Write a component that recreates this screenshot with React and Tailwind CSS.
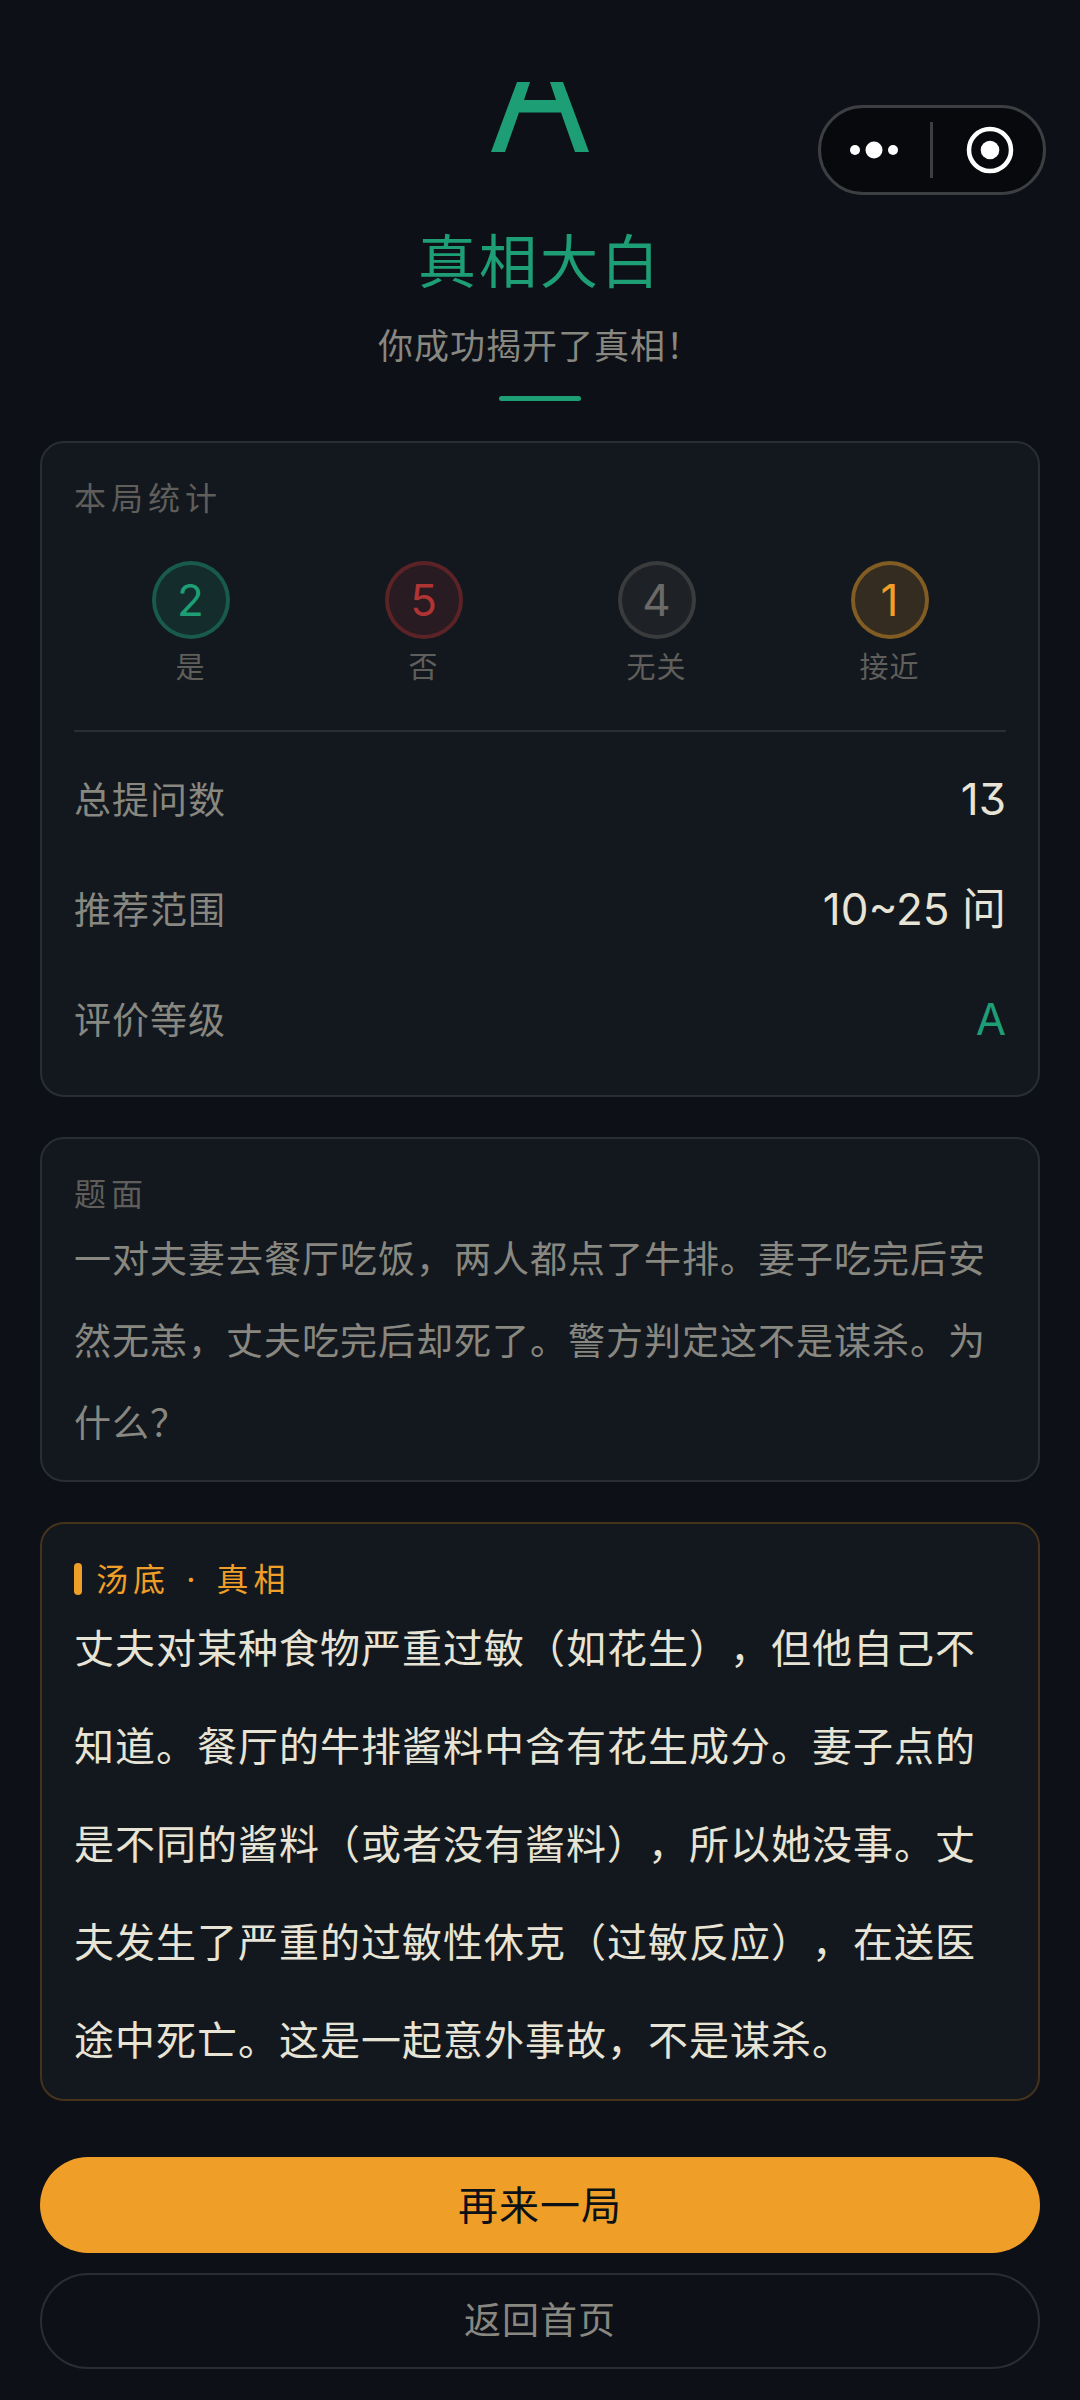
const counts = [
  { label: '是', value: 2, tone: 'border-[#1d9e75]/50 bg-[#1d9e75]/15 text-[#1d9e75]' },
  { label: '否', value: 5, tone: 'border-[#a32d2d]/50 bg-[#a32d2d]/15 text-[#b03434]' },
  { label: '无关', value: 4, tone: 'border-[#5f5e5a]/50 bg-[#5f5e5a]/15 text-[#6b6a66]' },
  { label: '接近', value: 1, tone: 'border-[#ef9f27]/50 bg-[#ef9f27]/15 text-[#ef9f27]' },
]

const summary = [
  { label: '总提问数', value: '13', color: 'text-[#e8e4d5]' },
  { label: '推荐范围', value: '10~25 问', color: 'text-[#e8e4d5]' },
  { label: '评价等级', value: 'A', color: 'text-[#1d9e75]' },
]

const NUMERIC = "font-['Inter','Noto_Sans_CJK_SC',sans-serif] [font-feature-settings:'cv09']"

function Capsule() {
  return (
    <div className="absolute top-[105px] right-[34px] flex h-[90px] w-[228px] items-center rounded-full border-3 border-[#3c3e42] bg-[#07090c]">
      <button aria-label="更多" className="flex h-full w-[109px] items-center justify-center pr-1">
        <svg width="48" height="18" viewBox="0 0 48 18" fill="#fff">
          <circle cx="5" cy="9" r="5" />
          <circle cx="24" cy="9" r="8.5" />
          <circle cx="43" cy="9" r="5" />
        </svg>
      </button>
      <span className="h-14 w-[3px] bg-[#3c3e42]" />
      <button aria-label="关闭" className="flex h-full flex-1 items-center justify-center pl-1">
        <svg width="48" height="48" viewBox="0 0 48 48">
          <circle cx="24" cy="24" r="21" fill="none" stroke="#fff" strokeWidth="4.5" />
          <circle cx="24" cy="24" r="9.3" fill="#fff" />
        </svg>
      </button>
    </div>
  )
}

function Emblem() {
  return (
    <svg width="98" height="70" viewBox="0 0 98 70" fill="#1d9e75" aria-hidden="true">
      <path d="M26 0H39L33 18H65L59 0H72L98 70H84L70 30.5H28L14 70H0Z" />
    </svg>
  )
}

function Card({ className, children }) {
  return (
    <section className={`mt-10 rounded-3xl border-2 bg-[#13181f] px-8 pt-[33px] ${className}`}>
      {children}
    </section>
  )
}

function CardTitle({ className, children }) {
  return <h2 className={`text-[32px] leading-[40px] tracking-[5px] ${className}`}>{children}</h2>
}

export default function App() {
  return (
    <main
      lang="zh-CN"
      className="relative min-h-screen bg-[#0d1017] px-10 pt-[82px] pb-[33px] font-['Noto_Sans_CJK_SC',sans-serif] tracking-[1px] text-[#888780] [text-spacing-trim:space-all]"
    >
      <Capsule />

      <header className="flex flex-col items-center">
        <Emblem />
        <h1 className="mt-16 text-[58px] leading-[84px] tracking-[3px] text-[#1d9e75]">真相大白</h1>
        <p className="mt-[18px] text-[35px] leading-[52px]">你成功揭开了真相！</p>
        <span className="mt-[26px] h-[5px] w-[82px] rounded-full bg-[#1d9e75]" />
      </header>

      <Card className="border-[#2a2d35] pb-[21px]">
        <CardTitle className="text-[#5f5e5a]">本局统计</CardTitle>
        <ul className="mt-[45px] grid grid-cols-4">
          {counts.map((c) => (
            <li key={c.label} className="flex flex-col items-center">
              <span className={`flex size-[78px] items-center justify-center rounded-full border-4 bg-clip-padding text-[44px] tracking-normal ${NUMERIC} ${c.tone}`}>
                {c.value}
              </span>
              <span className="mt-1.5 text-[29px] leading-[40px] text-[#5f5e5a]">{c.label}</span>
            </li>
          ))}
        </ul>
        <dl className="mt-[45px] border-t-2 border-[#2a2d35] pt-3">
          {summary.map((row) => (
            <div key={row.label} className="flex h-[110px] items-center justify-between">
              <dt className="text-[37px]">{row.label}</dt>
              <dd className={`text-[44px] tracking-normal ${NUMERIC} ${row.color}`}>{row.value}</dd>
            </div>
          ))}
        </dl>
      </Card>

      <Card className="border-[#2a2d35] pb-[18px]">
        <CardTitle className="text-[#5f5e5a]">题面</CardTitle>
        <p className="mt-1 text-[37px] leading-[82px]">
          一对夫妻去餐厅吃饭，两人都点了牛排。妻子吃完后安然无恙，丈夫吃完后却死了。警方判定这不是谋杀。为什么？
        </p>
      </Card>

      <Card className="border-[#ef9f27]/25 bg-clip-padding pb-3">
        <CardTitle className="flex items-start gap-3.5 text-[#ef9f27]">
          <span className="mt-1.5 h-8 w-2 rounded-full bg-[#ef9f27]" />
          <span>
            汤底 <span className="mx-1 font-['Inter'] leading-none">·</span> 真相
          </span>
        </CardTitle>
        <p className="text-[40px] leading-[98px] text-[#e8e4d5]">
          丈夫对某种食物严重过敏（如花生），但他自己不知道。餐厅的牛排酱料中含有花生成分。妻子点的是不同的酱料（或者没有酱料），所以她没事。丈夫发生了严重的过敏性休克（过敏反应），在送医途中死亡。这是一起意外事故，不是谋杀。
        </p>
      </Card>

      <div className="mt-14 flex flex-col gap-5">
        <button className="h-24 rounded-full bg-[#ef9f27] pb-1 text-[40px] tracking-[1px] text-[#0c1017]">
          再来一局
        </button>
        <button className="h-24 rounded-full border-2 border-[#2a2d35] pb-1 text-[37px] tracking-[1px]">
          返回首页
        </button>
      </div>
    </main>
  )
}
